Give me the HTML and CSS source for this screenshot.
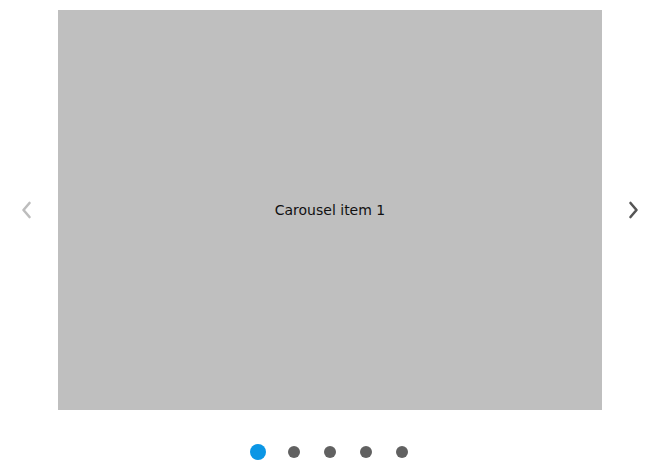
FILE: index.html
```html
<!DOCTYPE html>
<html>
<head>
<meta charset="utf-8">
<link rel="stylesheet" href="styles.css">
</head>
<body>
<div class="carousel">
  <div class="track">
    <button class="arrow prev" aria-label="Previous">
      <svg width="12" height="20" viewBox="0 0 12 20"><path d="M8.5 3 L2.5 10 L8.5 17" fill="none" stroke="currentColor" stroke-width="2.6" stroke-linecap="round" stroke-linejoin="round"/></svg>
    </button>
    <div class="slide">Carousel item 1</div>
    <button class="arrow next" aria-label="Next">
      <svg width="12" height="20" viewBox="0 0 12 20"><path d="M3.5 3 L9.5 10 L3.5 17" fill="none" stroke="currentColor" stroke-width="2.6" stroke-linecap="round" stroke-linejoin="round"/></svg>
    </button>
  </div>
  <div class="dots">
    <span class="dot-wrap"><span class="dot active"></span></span>
    <span class="dot-wrap"><span class="dot"></span></span>
    <span class="dot-wrap"><span class="dot"></span></span>
    <span class="dot-wrap"><span class="dot"></span></span>
    <span class="dot-wrap"><span class="dot"></span></span>
  </div>
</div>
</body>
</html>
```
FILE: styles.css
```css
html, body {
  margin: 0;
  padding: 0;
  background: #ffffff;
}
.carousel {
  width: 660px;
  padding-top: 10px;
  font-family: "DejaVu Sans", sans-serif;
}
.track {
  display: flex;
  align-items: center;
}
.arrow {
  width: 58px;
  height: 400px;
  border: 0;
  background: transparent;
  padding: 0;
  display: flex;
  align-items: center;
  justify-content: center;
}
.arrow.prev { color: #bdbdbd; }
.arrow.prev svg { margin-right: 4px; }
.arrow.next { color: #555555; }
.arrow.next svg { margin-left: 4px; }
.arrow svg { display: block; }
.slide {
  width: 544px;
  height: 400px;
  background: #bfbfbf;
  color: #111111;
  font-size: 14px;
  display: flex;
  align-items: center;
  justify-content: center;
}
.dots {
  display: flex;
  justify-content: center;
  margin-top: 34px;
  height: 16px;
}
.dot-wrap {
  width: 36px;
  height: 16px;
  display: flex;
  align-items: center;
  justify-content: center;
}
.dot {
  width: 12px;
  height: 12px;
  border-radius: 50%;
  background: #616161;
}
.dot.active {
  width: 16px;
  height: 16px;
  background: #0b96e5;
}
```
